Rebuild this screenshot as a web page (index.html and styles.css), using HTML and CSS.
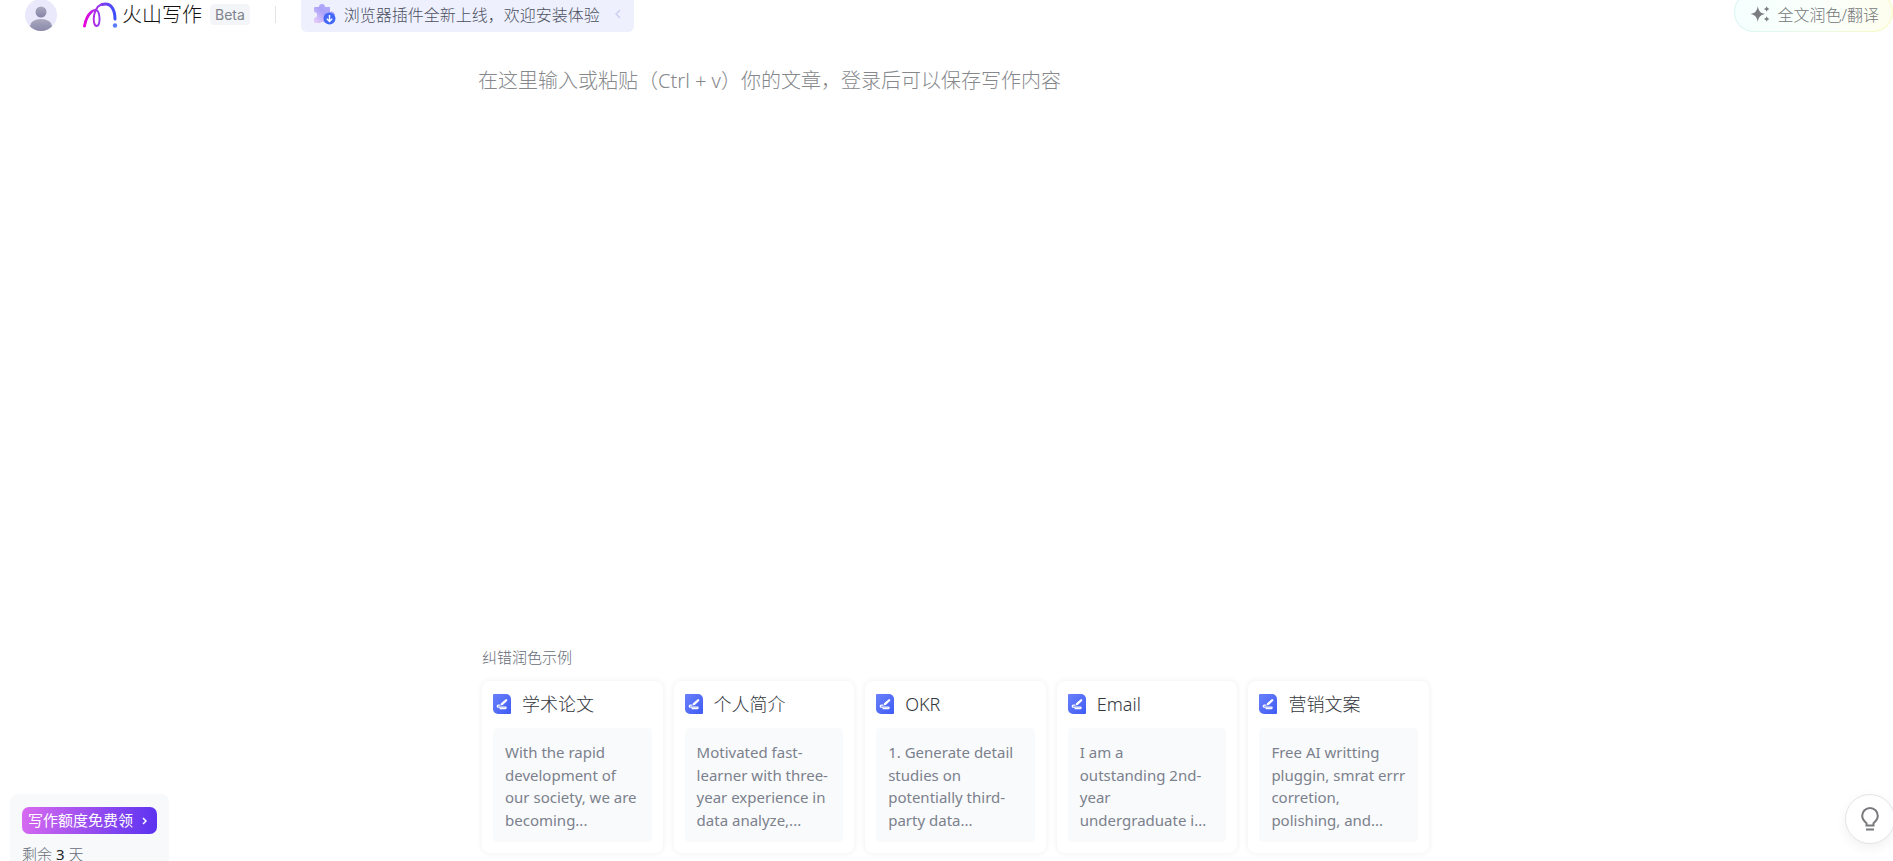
FILE: index.html
```html
<!DOCTYPE html>
<html lang="zh-CN">
<head>
<meta charset="utf-8">
<meta name="viewport" content="width=device-width, initial-scale=1">
<title>火山写作</title>
<link rel="stylesheet" href="styles.css">
</head>
<body>
<svg class="defs" width="0" height="0" aria-hidden="true">
  <defs>
    <linearGradient id="doc-fill" x1="0" y1="0" x2="1" y2="1">
      <stop offset="0" stop-color="#6a80fa"/><stop offset="1" stop-color="#3f5cf5"/>
    </linearGradient>
    <symbol id="doc" viewBox="0 0 18 20">
      <path d="M1 0h12a5 5 0 0 1 5 5v14a1 1 0 0 1-1 1H5a5 5 0 0 1-5-5V1a1 1 0 0 1 1-1z" fill="url(#doc-fill)"/>
      <path d="M7.300 11.600 8 9.300 12.400 5.400a1.100 1.100 0 0 1 1.600 1.600L9.800 11z" fill="#fff"/>
      <path d="M6.500 11.200H5.200a.9.900 0 0 0 0 1.900h7.200a.7.700 0 0 1 0 1.500H7" fill="none" stroke="#fff" stroke-width="1.200" stroke-linecap="round"/>
    </symbol>
  </defs>
</svg>
<div class="app">
  <header class="topbar">
    <button class="avatar" type="button" aria-label="账户">
      <svg viewBox="0 0 32 32" width="32" height="32">
        <defs>
          <clipPath id="disc"><circle cx="16" cy="16" r="16"/></clipPath>
          <linearGradient id="person" x1="0" y1="0" x2="0" y2="1"><stop offset="0" stop-color="#aaa9bf"/><stop offset="1" stop-color="#8483a6"/></linearGradient>
        </defs>
        <circle cx="16" cy="16" r="16" fill="#e9e9fb"/>
        <g clip-path="url(#disc)" fill="url(#person)"><circle cx="16" cy="13" r="5.500"/><ellipse cx="16" cy="27" rx="11" ry="7"/></g>
      </svg>
    </button>
    <a class="brand" href="#" aria-label="火山写作">
      <svg viewBox="0 0 35 26" width="35" height="26" fill="none" stroke-linecap="round" aria-hidden="true">
        <defs>
          <linearGradient id="ink" gradientUnits="userSpaceOnUse" x1="0" y1="0" x2="34" y2="0"><stop offset="0" stop-color="#f000d8"/><stop offset=".45" stop-color="#9a35ee"/><stop offset="1" stop-color="#2f52fa"/></linearGradient>
        </defs>
        <g stroke="url(#ink)">
          <path d="M1.500 24C3 16 8 8 12.500 8c4.800 0 5.500 16 1.200 16C8.500 24 9.500 2 21.500 2" stroke-width="1.900"/>
          <path d="M1.500 24C2.500 18 5.300 12.500 8.300 10" stroke-width="2.800"/>
          <path d="M19 2.500C29 0 32 9 32 17" stroke-width="3"/>
        </g>
        <circle cx="32" cy="23.500" r="2.200" fill="#5a7cf8"/>
      </svg>
      <span class="brand-name">火山写作</span>
    </a>
    <span class="beta">Beta</span>
    <span class="divider"></span>
    <a class="notice" href="#">
      <svg viewBox="0 0 24 24" width="24" height="24" aria-hidden="true">
        <defs><linearGradient id="puzzle" x1="1" y1="0" x2="0" y2="1"><stop offset="0" stop-color="#b9aefa"/><stop offset=".5" stop-color="#aaa2f8"/><stop offset="1" stop-color="#ecd0fb"/></linearGradient></defs>
        <path d="M3 5h4a3 3 0 1 1 6 0h5v5a3 3 0 1 1 0 5v6h-5a3 3 0 0 0-5 0H3a1 1 0 0 1-1-1v-4a3 3 0 0 0 0-6V6a1 1 0 0 1 1-1z" fill="url(#puzzle)"/>
        <circle cx="17.500" cy="16.500" r="6" fill="#4468f6"/>
        <path d="M17.500 13v6.500m-2.700-2.700 2.700 2.700 2.700-2.700" fill="none" stroke="#fff" stroke-width="1.400"/>
      </svg>
      <span>浏览器插件全新上线，欢迎安装体验</span>
      <svg class="notice-arrow" viewBox="0 0 6 10" width="6" height="10" aria-hidden="true"><path d="M5 1 1 5l4 4" fill="none" stroke="#c9cdf0" stroke-width="1.300"/></svg>
    </a>
    <button class="polish" type="button">
      <svg viewBox="0 0 18 16" width="20" height="18" fill="#7b7d80" aria-hidden="true">
        <path d="M7 1c1 4.500 2 6 6.500 7C9 9 8 10.500 7 15 6 10.500 5 9 .5 8 5 7 6 5.500 7 1z"/>
        <path d="m15 1 .8 1.700 1.700.8-1.700.8L15 6l-.8-1.700-1.700-.8 1.700-.8zM15 10l.8 1.700 1.700.8-1.700.8L15 15l-.8-1.700-1.700-.8 1.700-.8z"/>
      </svg>
      <span>全文润色/翻译</span>
    </button>
  </header>

  <main class="workspace">
    <textarea class="editor" aria-label="文章内容" placeholder="在这里输入或粘贴（Ctrl + v）你的文章，登录后可以保存写作内容"></textarea>
    <section class="examples">
      <h2 class="examples-title">纠错润色示例</h2>
      <div class="cards">
        <button class="card" type="button"><span class="card-head"><svg width="18" height="20"><use href="#doc"/></svg>学术论文</span><span class="card-text">With the rapid<br>development of<br>our society, we are<br>becoming...</span></button>
        <button class="card" type="button"><span class="card-head"><svg width="18" height="20"><use href="#doc"/></svg>个人简介</span><span class="card-text">Motivated fast-<br>learner with three-<br>year experience in<br>data analyze,...</span></button>
        <button class="card" type="button"><span class="card-head"><svg width="18" height="20"><use href="#doc"/></svg>OKR</span><span class="card-text">1. Generate detail<br>studies on<br>potentially third-<br>party data...</span></button>
        <button class="card" type="button"><span class="card-head"><svg width="18" height="20"><use href="#doc"/></svg>Email</span><span class="card-text">I am a<br>outstanding 2nd-<br>year<br>undergraduate i...</span></button>
        <button class="card" type="button"><span class="card-head"><svg width="18" height="20"><use href="#doc"/></svg>营销文案</span><span class="card-text">Free AI writting<br>pluggin, smrat errr<br>corretion,<br>polishing, and...</span></button>
      </div>
    </section>
  </main>

  <aside class="quota">
    <button class="quota-button" type="button">写作额度免费领
      <svg viewBox="0 0 5 8" width="5" height="8" aria-hidden="true"><path d="m1 1 3 3-3 3" fill="none" stroke="#fff" stroke-width="1.500"/></svg>
    </button>
    <p class="quota-left">剩余 <b>3</b> 天</p>
  </aside>

  <button class="tips" type="button" aria-label="提示">
    <svg viewBox="0 0 18 24" width="18" height="24" fill="none" stroke="#77797c" stroke-width="2" aria-hidden="true">
      <path d="M5.500 18.500v-2.300C3.500 14.500 1.200 12 1.200 8.800a7.800 7.800 0 0 1 15.600 0c0 3.200-2.300 5.700-4.300 7.400v2.300z"/>
      <path d="M5 22.500h8"/>
    </svg>
  </button>
</div>
</body>
</html>
```

FILE: styles.css
```css
* { box-sizing: border-box; }

body {
  margin: 0;
  background: #fff;
  color: #42464e;
  font-family: "Noto Sans", "Noto Sans CJK SC", sans-serif;
  font-size: 15px;
}

button, textarea {
  margin: 0;
  padding: 0;
  border: 0;
  background: none;
  color: inherit;
  font: inherit;
}

button { cursor: pointer; }
a { color: inherit; text-decoration: none; }
svg { display: block; flex: none; }
.defs { position: absolute; }

.app {
  position: relative;
  display: flex;
  flex-direction: column;
  height: 100vh;
  overflow: hidden;
}

.topbar {
  display: flex;
  align-items: center;
  height: 32px;
  padding-left: 25px;
  font-size: 16px;
}

.avatar { height: 32px; margin-top: -2px; }

.brand {
  display: flex;
  align-items: center;
  gap: 4px;
  height: 30px;
  margin: 0 8px 2px 26px;
}

.brand-name {
  color: #111;
  font-size: 20px;
  font-weight: 300;
  line-height: 28px;
}

.beta {
  padding: 0 5px;
  margin-bottom: 3px;
  border-radius: 4px;
  background: #f4f5f8;
  color: #7d828b;
  font-family: Inter, sans-serif;
  font-size: 14px;
  line-height: 21px;
}

.divider {
  width: 1px;
  height: 17px;
  margin: 0 25px 3px 25px;
  background: #e2e4e8;
}

.notice {
  display: flex;
  align-items: center;
  gap: 8px;
  height: 32px;
  padding: 0 13px 4px 11px;
  border-radius: 0 0 6px 6px;
  background: #eef0fe;
  color: #4b515e;
  font-weight: 300;
  white-space: nowrap;
}

.notice-arrow { margin-left: 7px; }

.polish {
  display: flex;
  align-items: center;
  gap: 7px;
  height: 40px;
  margin: -8px 0 0 auto;
  padding: 3px 13px 0 15px;
  border: 1px solid transparent;
  border-radius: 20px;
  background:
    linear-gradient(100deg, #f5fffe, #fbfffa 60%, #fefeee) padding-box,
    linear-gradient(100deg, #d8f6f4, #e9fae9 50%, #fafabf) border-box;
  color: #74777a;
  font-weight: 300;
  white-space: nowrap;
}

.workspace {
  display: flex;
  flex: 1;
  flex-direction: column;
  width: 100%;
  max-width: 975px;
  margin: 0 auto;
  padding: 33px 0 8px 19px;
}

.editor {
  flex: 1;
  width: 100%;
  outline: 0;
  resize: none;
  font-size: 20px;
  font-weight: 300;
  line-height: 32px;
}

.editor::placeholder { color: #86888c; opacity: 1; }

.examples { padding: 0 5px 0 4px; }

.examples-title {
  margin: 0 0 12px;
  color: #666c77;
  font-size: 15px;
  font-weight: 300;
  line-height: 24px;
}

.cards {
  display: grid;
  grid-template-columns: repeat(5, minmax(0, 1fr));
  gap: 11px;
}

.card {
  padding: 9px 11px 11px;
  border-radius: 8px;
  background: #fff;
  box-shadow: 0 0 6px rgba(0, 0, 0, 0.07);
  text-align: left;
}

.card-head {
  display: flex;
  align-items: center;
  gap: 11px;
  margin-bottom: 10px;
  color: #33363d;
  font-size: 18px;
  font-weight: 300;
  line-height: 28px;
}

.card-text {
  display: block;
  padding: 13px 0 11px 12px;
  border-radius: 4px;
  background: #f9fafc;
  color: #7b818c;
  font-size: 15px;
  line-height: 1.5;
  white-space: nowrap;
}

.quota {
  position: absolute;
  top: calc(100% - 67px);
  left: 10px;
  width: 159px;
  padding: 13px 12px;
  border-radius: 8px;
  background: #f8f9fb;
}

.quota-button {
  display: flex;
  align-items: center;
  justify-content: space-between;
  width: 100%;
  padding: 0 10px 0 6px;
  border-radius: 7px;
  background: linear-gradient(100deg, #d86af0, #5a32f0);
  color: #fff;
  font-size: 15px;
  line-height: 27px;
}

.quota-left {
  margin: 8px 0 0;
  color: #666c77;
  font-size: 15px;
  font-weight: 300;
  line-height: 24px;
}

.quota-left b { color: #22252b; font-weight: 400; }

.tips {
  position: absolute;
  right: -2px;
  bottom: 17px;
  display: grid;
  place-items: center;
  width: 50px;
  height: 50px;
  border: 1px solid #e3e4e6;
  border-radius: 50%;
  background: #fff;
  box-shadow: 0 4px 12px rgba(0, 0, 0, 0.06);
}
```
